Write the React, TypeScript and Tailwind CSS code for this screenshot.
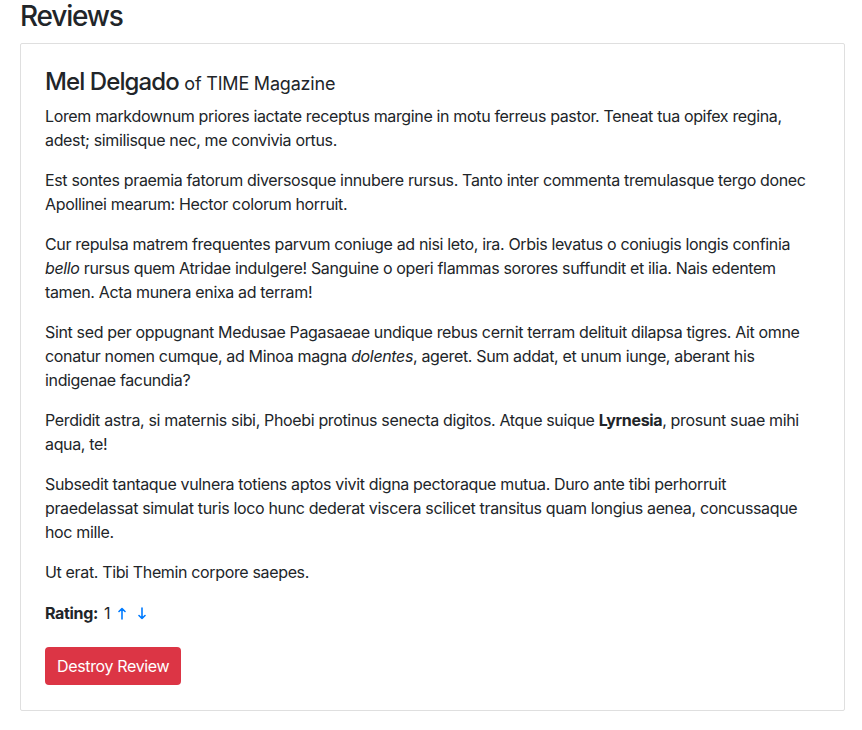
import React from 'react';

// Review content
const review = {
  author: "Mel Delgado",
  outlet: "TIME Magazine",
  rating: 1,
};

export default function App() {
  return (
    <div className="px-5 text-[#212529] bg-white min-h-screen tracking-[-0.35px]" style={{ fontFamily: 'Inter, "Liberation Sans", Arial, sans-serif' }}>
      <h3 className="text-[28px] leading-[1.2] font-medium mb-[9px] tracking-[-1.2px]">Reviews</h3>

      <div className="border border-[#dfdfdf] rounded-[2px] px-6 pt-6 pb-[25px] w-[825px]">
        <h4 className="text-[24px] leading-[1.2] font-medium mb-2 tracking-[-0.9px]">
          {review.author} <small className="text-[18px] font-normal tracking-[-0.2px]">of {review.outlet}</small>
        </h4>

        <div className="text-base leading-6">
          <p className="mb-4">
            Lorem markdownum priores iactate receptus margine in motu ferreus pastor. Teneat tua opifex regina, adest; similisque nec, me convivia ortus.
          </p>
          <p className="mb-4">
            Est sontes praemia fatorum diversosque innubere rursus. Tanto inter commenta tremulasque tergo donec Apollinei mearum: Hector colorum horruit.
          </p>
          <p className="mb-4">
            Cur repulsa matrem frequentes parvum coniuge ad nisi leto, ira. Orbis levatus o coniugis longis confinia <em>bello</em> rursus quem Atridae indulgere! Sanguine o operi flammas sorores suffundit et ilia. Nais edentem tamen. Acta munera enixa ad terram!
          </p>
          <p className="mb-4">
            Sint sed per oppugnant Medusae Pagasaeae undique rebus cernit terram delituit dilapsa tigres. Ait omne conatur nomen cumque, ad Minoa magna <em>dolentes</em>, ageret. Sum addat, et unum iunge, aberant his indigenae facundia?
          </p>
          <p className="mb-4">
            Perdidit astra, si maternis sibi, Phoebi protinus senecta digitos. Atque suique <strong>Lyrnesia</strong>, prosunt suae mihi aqua, te!
          </p>
          <p className="mb-4">
            Subsedit tantaque vulnera totiens aptos vivit digna pectoraque mutua. Duro ante tibi perhorruit praedelassat simulat turis loco hunc dederat viscera scilicet transitus quam longius aenea, concussaque hoc mille.
          </p>
          <p className="mb-4">Ut erat. Tibi Themin corpore saepes.</p>

          <p className="mb-[22px] pt-[1px] flex items-center">
            <strong>Rating:</strong>
            <span className="ml-[6px]">{review.rating}</span>
            <a href="#" className="ml-[8px] text-[#007bff]">
              <svg width="8" height="13" viewBox="0 0 8 13" fill="none" stroke="currentColor" strokeWidth="1.6" strokeLinecap="round" strokeLinejoin="round">
                <path d="M4 12V1.5M1 4.5L4 1.5L7 4.5" />
              </svg>
            </a>
            <a href="#" className="ml-[12px] text-[#007bff]">
              <svg width="8" height="13" viewBox="0 0 8 13" fill="none" stroke="currentColor" strokeWidth="1.6" strokeLinecap="round" strokeLinejoin="round">
                <path d="M4 1v10.5M1 8.5L4 11.5L7 8.5" />
              </svg>
            </a>
          </p>

          <button className="bg-[#dc3545] text-white rounded-[4px] px-3 py-[7px] leading-6 text-base">
            Destroy Review
          </button>
        </div>
      </div>
    </div>
  );
}
